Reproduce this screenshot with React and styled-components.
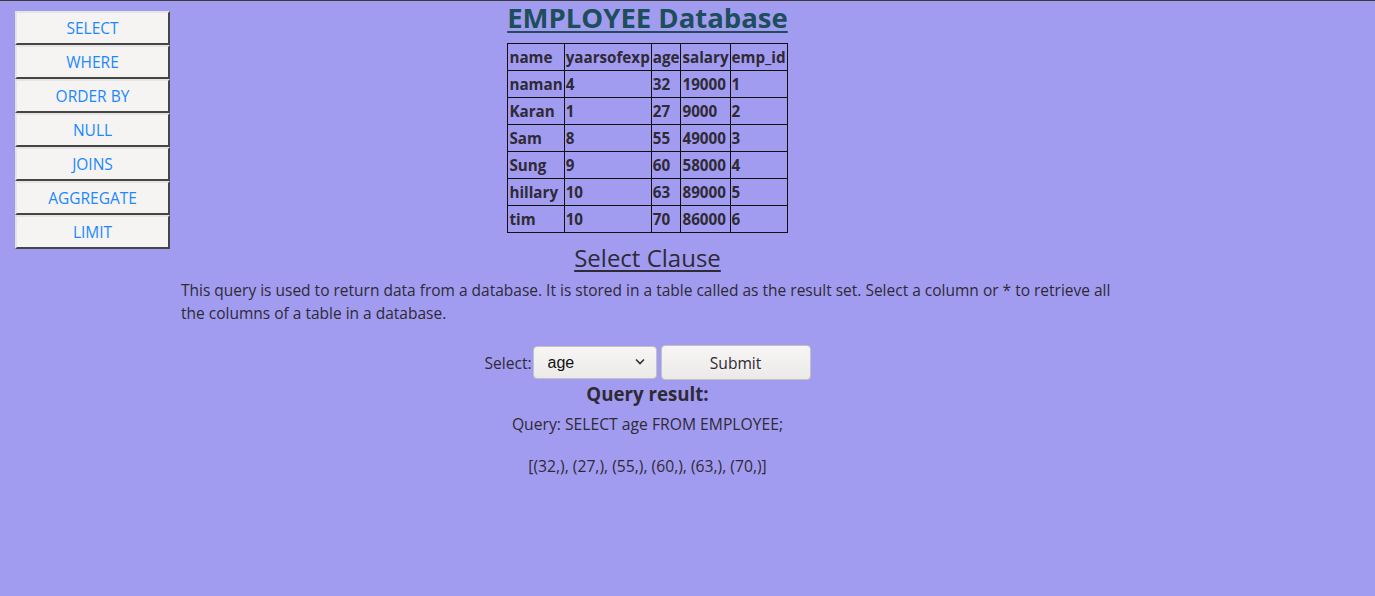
import React from "react";
import styled, { createGlobalStyle } from "styled-components";

const Global = createGlobalStyle`
  html, body { margin: 0; padding: 0; }
  body {
    background: #a29cf0;
    font-family: "Open Sans", "Noto Sans", sans-serif;
    color: #2e2a36;
    min-height: 596px;
    border-top: 1px solid #3a3a3a;
  }
`;

const Page = styled.div`
  display: flex;
  align-items: flex-start;
`;

const Sidebar = styled.nav`
  display: flex;
  flex-direction: column;
  width: 155px;
  margin: 10px 0 0 15px;
`;

const NavButton = styled.button`
  height: 34px;
  width: 100%;
  background: #f5f4f2;
  border: 2px outset #b0b0b0;
  border-top-color: #e4e4e4;
  border-left-color: #e4e4e4;
  border-right-color: #999;
  border-bottom-color: #999;
  color: #1a88ff;
  font-family: inherit;
  font-size: 15.5px;
  padding: 0;
  cursor: pointer;
`;

const Main = styled.main`
  width: 955px;
  display: flex;
  flex-direction: column;
  align-items: center;
`;

const Title = styled.h1`
  margin: 2px 0 10px;
  font-size: 27.5px;
  font-weight: 700;
  color: #1d4e5c;
  text-decoration: underline;
  text-decoration-thickness: 2px;
  text-underline-offset: 3px;
  line-height: 30px;
`;

const Table = styled.table`
  border-collapse: collapse;
  font-size: 15.2px;
  font-weight: 700;
`;

const Cell = styled.td`
  border: 1px solid #111;
  height: 26px;
  padding: 0 1px;
  text-align: left;
`;

const HeadCell = styled(Cell).attrs({ as: "th" })``;

const Subtitle = styled.h2`
  margin: 10px 0 6px;
  font-size: 24px;
  font-weight: 500;
  text-decoration: underline;
  text-decoration-thickness: 2px;
  text-underline-offset: 3px;
  line-height: 30px;
`;

const Paragraph = styled.p`
  align-self: stretch;
  margin: 0;
  padding: 0 10px 0 11px;
  font-size: 15.5px;
  line-height: 23px;
`;

const Form = styled.form`
  margin-top: 20px;
  display: flex;
  align-items: center;
  font-size: 15.6px;
`;

const SelectWrap = styled.span`
  position: relative;
  display: inline-flex;
  margin-left: 1px;
`;

const Select = styled.select`
  appearance: none;
  width: 124px;
  height: 33px;
  border: 1px solid #c4c2c0;
  border-radius: 4px;
  background: linear-gradient(#f7f6f5, #ebeae8);
  font-family: "Liberation Sans", sans-serif;
  font-size: 16px;
  padding: 0 10px 0 14px;
  color: #111;
`;

const Chevron = styled.svg`
  position: absolute;
  right: 12px;
  top: 12px;
  pointer-events: none;
`;

const Submit = styled.button`
  margin-left: 4px;
  width: 150px;
  height: 35px;
  border: 1px solid #c4c2c0;
  border-radius: 4px;
  background: linear-gradient(#f7f6f5, #ebeae8);
  font-family: inherit;
  font-size: 15.6px;
  color: #2e2a36;
`;

const ResultHeading = styled.h3`
  margin: 1px 0 6px;
  font-size: 18.7px;
  font-weight: 700;
`;

const Line = styled.p`
  margin: 0 0 18px;
  font-size: 15.7px;
  line-height: 24px;
`;

const rows = [
  ["naman", "4", "32", "19000", "1"],
  ["Karan", "1", "27", "9000", "2"],
  ["Sam", "8", "55", "49000", "3"],
  ["Sung", "9", "60", "58000", "4"],
  ["hillary", "10", "63", "89000", "5"],
  ["tim", "10", "70", "86000", "6"],
];

const nav = ["SELECT", "WHERE", "ORDER BY", "NULL", "JOINS", "AGGREGATE", "LIMIT"];

export default function App() {
  return (
    <>
      <Global />
      <Page>
        <Sidebar>
          {nav.map((n) => (
            <NavButton key={n}>{n}</NavButton>
          ))}
        </Sidebar>
        <Main>
          <Title>EMPLOYEE Database</Title>
          <Table>
            <tbody>
              <tr>
                {["name", "yaarsofexp", "age", "salary", "emp_id"].map((h) => (
                  <HeadCell key={h}>{h}</HeadCell>
                ))}
              </tr>
              {rows.map((r) => (
                <tr key={r[0]}>
                  {r.map((c, i) => (
                    <Cell key={i}>{c}</Cell>
                  ))}
                </tr>
              ))}
            </tbody>
          </Table>
          <Subtitle>Select Clause</Subtitle>
          <Paragraph>
            This query is used to return data from a database. It is stored in a table called as the result set. Select a column or * to retrieve all the columns of a table in a database.
          </Paragraph>
          <Form onSubmit={(e) => e.preventDefault()}>
            <span>Select:</span>
            <SelectWrap>
              <Select defaultValue="age">
                <option>name</option>
                <option>yaarsofexp</option>
                <option>age</option>
                <option>salary</option>
                <option>emp_id</option>
              </Select>
              <Chevron width="10" height="7" viewBox="0 0 10 7">
                <path d="M1 1.5 L5 5.5 L9 1.5" fill="none" stroke="#333" strokeWidth="1.6" />
              </Chevron>
            </SelectWrap>
            <Submit type="submit">Submit</Submit>
          </Form>
          <ResultHeading>Query result:</ResultHeading>
          <Line>Query: SELECT age FROM EMPLOYEE;</Line>
          <Line>[(32,), (27,), (55,), (60,), (63,), (70,)]</Line>
        </Main>
      </Page>
    </>
  );
}
